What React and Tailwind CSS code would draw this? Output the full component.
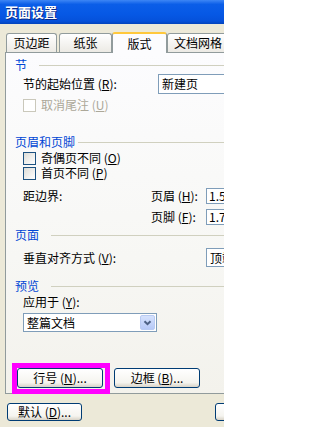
import React from "react";

const font = { fontFamily: '"Noto Sans CJK SC", "Noto Sans", sans-serif' };

function Heading({ children, gap }) {
  return (
    <div className="flex items-center h-[14px] pr-[8px]">
      <span className="shrink-0 text-[#0046d5] text-[12px] leading-[14px] whitespace-nowrap">{children}</span>
      <div className={`flex-1 h-px bg-[#d0d0bf] ${gap}`} />
    </div>
  );
}

function Checkbox({ disabled, label, m }) {
  return (
    <div className="flex items-center h-[14px] pl-[8px]">
      <div
        className={
          disabled
            ? "shrink-0 w-[13px] h-[13px] border border-[#cac8bb] bg-white"
            : "shrink-0 w-[13px] h-[13px] border border-[#1c5180] bg-[linear-gradient(135deg,#dcdcd7,#ffffff)]"
        }
      />
      <span
        className={`shrink-0 ml-[5px] text-[12px] leading-[14px] whitespace-nowrap ${
          disabled ? "text-[#aca899]" : "text-black"
        }`}
      >
        {label} (<u>{m}</u>)
      </span>
    </div>
  );
}

function Chevron() {
  return (
    <svg width="9" height="6" viewBox="0 0 9 6">
      <path d="M1.5 1.2 L4.5 4.2 L7.5 1.2" fill="none" stroke="#4d6185" strokeWidth="2" />
    </svg>
  );
}

function Combo({ text, w, h, arrow }) {
  return (
    <div className={`shrink-0 flex items-stretch border border-[#7f9db9] bg-white ${w} ${h}`}>
      <div className="flex-1 flex items-center pl-[3px] text-[12px] leading-[14px] whitespace-nowrap overflow-hidden">
        {text}
      </div>
      {arrow && (
        <div className="shrink-0 w-[15px] m-px flex items-center justify-center rounded-[2px] border border-[#b9cbf3] bg-[linear-gradient(180deg,#d6e2fd,#b6c9f7)]">
          <Chevron />
        </div>
      )}
    </div>
  );
}

function Button({ children, w, h, extra = "" }) {
  return (
    <div
      className={`flex items-center justify-center shrink-0 rounded-[3px] border border-[#003c74] bg-[linear-gradient(180deg,#ffffff,#f5f4ef_75%,#d8d3c7)] text-[12px] leading-[14px] whitespace-nowrap ${w} ${h} ${extra}`}
    >
      {children}
    </div>
  );
}

export default function App() {
  return (
    <div className="relative w-[224px] h-[427px] overflow-hidden bg-[#ece9d8] text-black" style={font}>
      {/* Title bar */}
      <div className="flex items-center h-[24px] pl-[5px] bg-[linear-gradient(180deg,#3d86f5_0%,#0b5ee8_18%,#0658e5_60%,#0551da_88%,#0343bb_100%)]">
        <span className="text-white font-bold text-[13px] leading-[16px] [text-shadow:1px_1px_0_#0b2a86]">
          页面设置
        </span>
      </div>

      {/* Tabs */}
      <div className="flex items-end h-[21px] mt-[7px] pl-[6px]">
        <div className="shrink-0 w-[51px] h-[19px] flex items-center justify-center border border-b-0 border-[#919b9c] rounded-t-[3px] bg-[linear-gradient(180deg,#ffffff,#eceae4)] text-[12px] leading-[14px]">
          页边距
        </div>
        <div className="shrink-0 ml-[2px] w-[53px] h-[19px] flex items-center justify-center border border-b-0 border-[#919b9c] rounded-t-[3px] bg-[linear-gradient(180deg,#ffffff,#eceae4)] text-[12px] leading-[14px]">
          纸张
        </div>
        <div className="shrink-0 relative z-10 translate-y-px w-[55px] h-[21px] flex items-center justify-center border-x border-[#919b9c] border-t-2 border-t-[#ffc83c] rounded-t-[3px] bg-[#fcfcfe] text-[12px] leading-[14px]">
          版式
        </div>
        <div className="shrink-0 w-[63px] h-[19px] flex items-center pl-[6px] border border-b-0 border-[#919b9c] rounded-t-[3px] bg-[linear-gradient(180deg,#ffffff,#eceae4)] text-[12px] leading-[14px] whitespace-nowrap">
          文档网格
        </div>
      </div>

      {/* Panel */}
      <div className="ml-[5px] w-[240px] h-[342px] border border-[#919b9c] bg-[linear-gradient(180deg,#fcfcfe,#f7f7f4_60%,#f3f2ec)] pl-[9px] flex flex-col">
        <div className="mt-[5px]">
          <Heading gap="ml-[12px]">节</Heading>
        </div>
        <div className="mt-[2px] flex items-center h-[20px] pl-[8px]">
          <div className="shrink-0 w-[135px] text-[12px] leading-[14px] whitespace-nowrap">
            节的起始位置 (<u>R</u>):
          </div>
          <Combo text="新建页" w="w-[90px]" h="h-[20px]" />
        </div>
        <div className="mt-[4px]">
          <Checkbox disabled label="取消尾注" m="U" />
        </div>

        <div className="mt-[23px]">
          <Heading gap="ml-[3px]">页眉和页脚</Heading>
        </div>
        <div className="mt-[2px]">
          <Checkbox label="奇偶页不同" m="O" />
        </div>
        <div className="mt-[1px]">
          <Checkbox label="首页不同" m="P" />
        </div>
        <div className="mt-[8px] flex items-center h-[16px] pl-[8px]">
          <div className="shrink-0 w-[128px] text-[12px] leading-[14px] whitespace-nowrap">距边界:</div>
          <div className="shrink-0 w-[55px] text-[12px] leading-[14px] whitespace-nowrap">
            页眉 (<u>H</u>):
          </div>
          <div className="shrink-0 w-[44px] h-[16px] border border-[#7f9db9] bg-white flex items-center pl-[2px] text-[12px] leading-[14px] whitespace-nowrap overflow-hidden">
            1.5 厘米
          </div>
        </div>
        <div className="mt-[5px] flex items-center h-[16px] pl-[136px]">
          <div className="shrink-0 w-[55px] text-[12px] leading-[14px] whitespace-nowrap">
            页脚 (<u>F</u>):
          </div>
          <div className="shrink-0 w-[44px] h-[16px] border border-[#7f9db9] bg-white flex items-center pl-[2px] text-[12px] leading-[14px] whitespace-nowrap overflow-hidden">
            1.75 厘米
          </div>
        </div>

        <div className="mt-[3px]">
          <Heading gap="ml-[12px]">页面</Heading>
        </div>
        <div className="mt-[6px] flex items-center h-[19px] pl-[8px]">
          <div className="shrink-0 w-[183px] text-[12px] leading-[14px] whitespace-nowrap">
            垂直对齐方式 (<u>V</u>):
          </div>
          <Combo text="顶端对齐" w="w-[60px]" h="h-[19px]" />
        </div>

        <div className="mt-[12px]">
          <Heading gap="ml-[12px]">预览</Heading>
        </div>
        <div className="mt-[2px] h-[14px] pl-[8px] text-[12px] leading-[14px] whitespace-nowrap">
          应用于 (<u>Y</u>):
        </div>
        <div className="mt-[4px] pl-[8px]">
          <Combo text="整篇文档" w="w-[134px]" h="h-[19px]" arrow />
        </div>

        <div className="mt-[36px] flex pl-[2px]">
          <Button w="w-[86px]" h="h-[20px]">
            行号 (<u>N</u>)...
          </Button>
          <Button w="w-[86px]" h="h-[20px]" extra="ml-[11px]">
            边框 (<u>B</u>)...
          </Button>
        </div>
      </div>

      {/* Bottom buttons */}
      <div className="mt-[9px] flex pl-[7px]">
        <Button w="w-[75px]" h="h-[18px]">
          默认 (<u>D</u>)...
        </Button>
        <Button w="w-[75px]" h="h-[18px]" extra="ml-[133px]">
          确定
        </Button>
      </div>

      {/* Magenta highlight annotation */}
      <div className="absolute left-[12px] top-[363px] w-[98px] h-[31px] border-[5px] border-[#f0f]" />
    </div>
  );
}
